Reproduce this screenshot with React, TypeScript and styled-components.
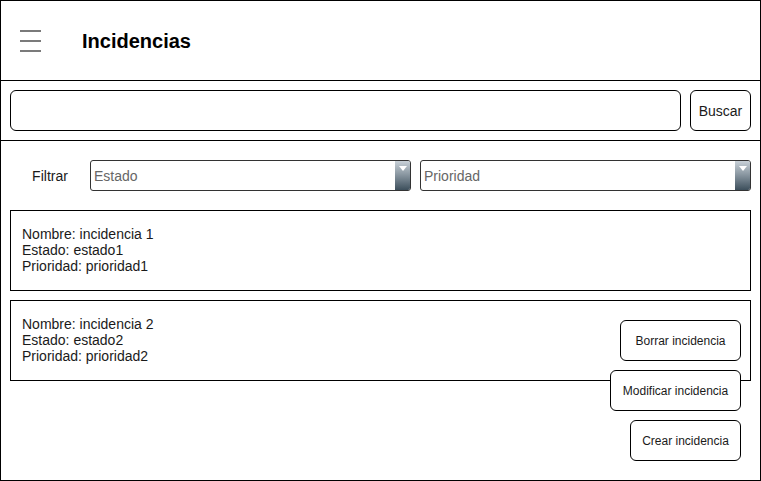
import React from "react";
import styled, { createGlobalStyle } from "styled-components";

const Global = createGlobalStyle`
  html, body { margin: 0; padding: 0; background: #fff; }
  body { font-family: "Liberation Sans", Arial, sans-serif; color: #000; }
  * { box-sizing: border-box; }
`;

const Frame = styled.div`
  width: 761px;
  height: 481px;
  border: 1px solid #000;
  display: flex;
  flex-direction: column;
  background: #fff;
`;

const Header = styled.header`
  height: 80px;
  border-bottom: 1px solid #000;
  display: flex;
  align-items: center;
  padding-left: 19px;
  gap: 41px;
`;

const Title = styled.h1`
  margin: 0;
  font-size: 20px;
  font-weight: bold;
  line-height: 24px;
  color: #000;
`;

const SearchRow = styled.div`
  height: 60px;
  border-bottom: 1px solid #000;
  display: flex;
  padding: 9px 9px 0 9px;
  gap: 9px;
`;

const SearchInput = styled.div`
  flex: 1;
  height: 41px;
  border: 1px solid #000;
  border-radius: 6px;
`;

const Button = styled.button<{ $w: number; $size?: number }>`
  flex-shrink: 0;
  width: ${(p) => p.$w}px;
  height: 41px;
  border: 1px solid #000;
  border-radius: 6px;
  background: #fff;
  font-family: "Liberation Sans", Arial, sans-serif;
  font-size: ${(p) => p.$size ?? 12}px;
  color: #1a1a1a;
  padding: 0;
  display: flex;
  align-items: center;
  justify-content: center;
  position: relative;
`;

const Main = styled.main`
  display: flex;
  flex-direction: column;
  padding: 0 9px;
`;

const FilterRow = styled.div`
  margin-top: 19px;
  height: 31px;
  display: flex;
  align-items: center;
`;

const FilterLabel = styled.span`
  width: 80px;
  text-align: center;
  font-size: 14px;
  color: #1a1a1a;
`;

const Select = styled.div<{ $w: number }>`
  width: ${(p) => p.$w}px;
  height: 31px;
  border: 1px solid #333;
  border-radius: 3px;
  display: flex;
  align-items: center;
  overflow: hidden;
  & + & {
    margin-left: 9px;
  }
`;

const SelectText = styled.span`
  flex: 1;
  padding-left: 3px;
  font-size: 14px;
  color: #666;
`;

const SelectArrow = styled.div`
  width: 15px;
  height: 100%;
  background: linear-gradient(#c9d1d8, #8c99a3 45%, #3d4f5c);
  display: flex;
  justify-content: center;
  padding-top: 5px;
`;

const Triangle = styled.div`
  width: 0;
  height: 0;
  border-left: 4px solid transparent;
  border-right: 4px solid transparent;
  border-top: 5px solid #fff;
`;

const Card = styled.section<{ $first?: boolean }>`
  margin-top: ${(p) => (p.$first ? 19 : 9)}px;
  height: 81px;
  border: 1px solid #000;
  display: flex;
  justify-content: space-between;
  padding-left: 11px;
`;

const Info = styled.div`
  align-self: center;
  font-size: 14px;
  line-height: 16px;
  color: #1a1a1a;
  margin-top: -1px;
`;

const Actions = styled.div`
  display: flex;
  flex-direction: column;
  align-items: flex-end;
  gap: 9px;
  margin-top: 19px;
  margin-right: 9px;
  flex-shrink: 0;
`;

const Menu = () => (
  <svg width="21" height="22" viewBox="0 0 21 22">
    <g stroke="#222" strokeWidth="1.2">
      <line x1="0" y1="1" x2="21" y2="1" />
      <line x1="0" y1="11" x2="21" y2="11" />
      <line x1="0" y1="21" x2="21" y2="21" />
    </g>
  </svg>
);

const incidencias = [
  { nombre: "incidencia 1", estado: "estado1", prioridad: "prioridad1" },
  { nombre: "incidencia 2", estado: "estado2", prioridad: "prioridad2" },
];

export default function App() {
  return (
    <>
      <Global />
      <Frame>
        <Header>
          <Menu />
          <Title>Incidencias</Title>
        </Header>
        <SearchRow>
          <SearchInput />
          <Button $w={61} $size={14}>Buscar</Button>
        </SearchRow>
        <Main>
          <FilterRow>
            <FilterLabel>Filtrar</FilterLabel>
            <Select $w={321}>
              <SelectText>Estado</SelectText>
              <SelectArrow>
                <Triangle />
              </SelectArrow>
            </Select>
            <Select $w={331}>
              <SelectText>Prioridad</SelectText>
              <SelectArrow>
                <Triangle />
              </SelectArrow>
            </Select>
          </FilterRow>
          {incidencias.map((inc, i) => (
            <Card key={inc.nombre} $first={i === 0}>
              <Info>
                Nombre: {inc.nombre}
                <br />
                Estado: {inc.estado}
                <br />
                Prioridad: {inc.prioridad}
              </Info>
              {i === 1 && (
                <Actions>
                  <Button $w={121}>Borrar incidencia</Button>
                  <Button $w={131}>Modificar incidencia</Button>
                  <Button $w={111}>Crear incidencia</Button>
                </Actions>
              )}
            </Card>
          ))}
        </Main>
      </Frame>
    </>
  );
}
